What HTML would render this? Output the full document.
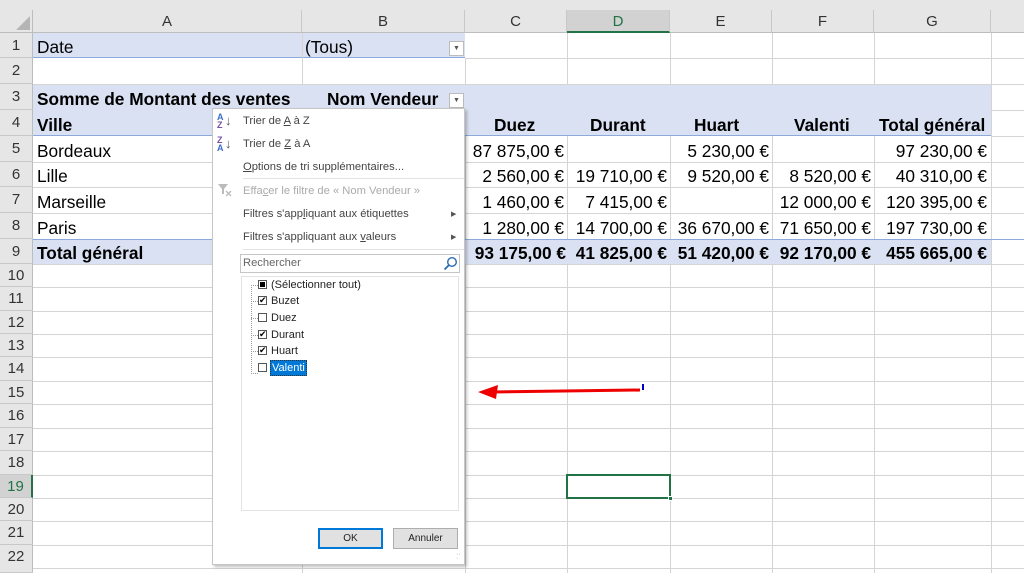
<!DOCTYPE html>
<html><head><meta charset="utf-8"><style>
*{margin:0;padding:0;box-sizing:border-box}
body{width:1024px;height:573px;overflow:hidden;background:#fff;position:relative;font-family:"Liberation Sans",sans-serif}
.a{position:absolute}
.vl{position:absolute;width:1px;background:#d4d4d4}
.hl{position:absolute;height:1px;background:#d4d4d4}
.ch{position:absolute;top:10px;height:23px;background:#e6e6e6;border-right:1px solid #c8c8c8;border-bottom:1px solid #bdbdbd;font-size:15px;color:#333;text-align:center;line-height:23px}
.rh{position:absolute;left:0;width:33px;background:#e6e6e6;border-bottom:1px solid #c8c8c8;border-right:1px solid #bdbdbd;font-size:15px;color:#333;text-align:center}
.c{position:absolute;font-size:17.3px;color:#000;white-space:nowrap;line-height:28px;height:26px}
.b{font-weight:bold}
.r{text-align:right}
.m{position:absolute;left:243px;font-size:11.2px;color:#444;white-space:nowrap}
.g{color:#aaa}
.it{position:absolute;left:271px;font-size:11px;color:#222;white-space:nowrap}
.cb{position:absolute;left:258px;width:9px;height:9px;border:1px solid #555;background:#fff;font-size:9px;line-height:7px;text-align:center;color:#000}
</style></head><body>
<div class="a" style="left:0;top:0;width:1024px;height:10px;background:#e6e6e6"></div>
<div class="a" style="left:0;top:10px;width:33px;height:23px;background:#e6e6e6;border-right:1px solid #bdbdbd;border-bottom:1px solid #bdbdbd"></div>
<svg class="a" style="left:16px;top:16px" width="14" height="14"><polygon points="14,0 14,14 0,14" fill="#b5b5b5"/></svg>
<div class="ch" style="left:33px;width:269px">A</div>
<div class="ch" style="left:302px;width:163px">B</div>
<div class="ch" style="left:465px;width:102px">C</div>
<div class="ch" style="left:567px;width:103px;background:#d2d2d2;color:#217346;border-bottom:2px solid #217346">D</div>
<div class="ch" style="left:670px;width:102px">E</div>
<div class="ch" style="left:772px;width:102px">F</div>
<div class="ch" style="left:874px;width:117px">G</div>
<div class="ch" style="left:991px;width:40px"></div>

<div class="rh" style="top:33px;height:25px;line-height:25px">1</div>
<div class="rh" style="top:58px;height:26px;line-height:26px">2</div>
<div class="rh" style="top:84px;height:26px;line-height:26px">3</div>
<div class="rh" style="top:110px;height:26px;line-height:26px">4</div>
<div class="rh" style="top:136px;height:26px;line-height:26px">5</div>
<div class="rh" style="top:162px;height:25px;line-height:25px">6</div>
<div class="rh" style="top:187px;height:26px;line-height:26px">7</div>
<div class="rh" style="top:213px;height:26px;line-height:26px">8</div>
<div class="rh" style="top:239px;height:25px;line-height:25px">9</div>
<div class="rh" style="top:264px;height:23px;line-height:23px">10</div>
<div class="rh" style="top:287px;height:24px;line-height:24px">11</div>
<div class="rh" style="top:311px;height:23px;line-height:23px">12</div>
<div class="rh" style="top:334px;height:23px;line-height:23px">13</div>
<div class="rh" style="top:357px;height:24px;line-height:24px">14</div>
<div class="rh" style="top:381px;height:23px;line-height:23px">15</div>
<div class="rh" style="top:404px;height:24px;line-height:24px">16</div>
<div class="rh" style="top:428px;height:23px;line-height:23px">17</div>
<div class="rh" style="top:451px;height:24px;line-height:24px">18</div>
<div class="rh" style="top:475px;height:23px;line-height:23px;background:#d2d2d2;color:#217346;border-right:2px solid #217346">19</div>
<div class="rh" style="top:498px;height:23px;line-height:23px">20</div>
<div class="rh" style="top:521px;height:24px;line-height:24px">21</div>
<div class="rh" style="top:545px;height:28px;line-height:23px">22</div>

<div class="a" style="left:33px;top:33px;width:432px;height:25px;background:#d9e1f2;border-bottom:1px solid #8ea9db"></div>
<div class="a" style="left:33px;top:84px;width:958px;height:52px;background:#d9e1f2;border-bottom:1px solid #8ea9db"></div>
<div class="a" style="left:33px;top:239px;width:958px;height:25px;background:#d9e1f2;border-top:1px solid #8ea9db"></div>

<div class="vl" style="left:302px;top:33px;height:51px"></div>
<div class="vl" style="left:302px;top:136px;height:103px"></div>
<div class="vl" style="left:302px;top:264px;height:309px"></div>
<div class="vl" style="left:465px;top:58px;height:26px"></div>
<div class="vl" style="left:465px;top:136px;height:103px"></div>
<div class="vl" style="left:465px;top:264px;height:309px"></div>
<div class="vl" style="left:567px;top:33px;height:51px"></div>
<div class="vl" style="left:567px;top:136px;height:103px"></div>
<div class="vl" style="left:567px;top:264px;height:309px"></div>
<div class="vl" style="left:670px;top:33px;height:51px"></div>
<div class="vl" style="left:670px;top:136px;height:103px"></div>
<div class="vl" style="left:670px;top:264px;height:309px"></div>
<div class="vl" style="left:772px;top:33px;height:51px"></div>
<div class="vl" style="left:772px;top:136px;height:103px"></div>
<div class="vl" style="left:772px;top:264px;height:309px"></div>
<div class="vl" style="left:874px;top:33px;height:51px"></div>
<div class="vl" style="left:874px;top:136px;height:103px"></div>
<div class="vl" style="left:874px;top:264px;height:309px"></div>
<div class="vl" style="left:991px;top:33px;height:540px"></div>
<div class="hl" style="left:465px;top:58px;width:559px"></div>
<div class="hl" style="left:33px;top:84px;width:991px"></div>
<div class="hl" style="left:991px;top:110px;width:33px"></div>
<div class="hl" style="left:991px;top:136px;width:33px"></div>
<div class="hl" style="left:33px;top:162px;width:991px"></div>
<div class="hl" style="left:33px;top:187px;width:991px"></div>
<div class="hl" style="left:33px;top:213px;width:991px"></div>
<div class="hl" style="left:33px;top:239px;width:991px;background:#8ea9db"></div>
<div class="hl" style="left:33px;top:264px;width:991px"></div>
<div class="hl" style="left:33px;top:287px;width:991px"></div>
<div class="hl" style="left:33px;top:311px;width:991px"></div>
<div class="hl" style="left:33px;top:334px;width:991px"></div>
<div class="hl" style="left:33px;top:357px;width:991px"></div>
<div class="hl" style="left:33px;top:381px;width:991px"></div>
<div class="hl" style="left:33px;top:404px;width:991px"></div>
<div class="hl" style="left:33px;top:428px;width:991px"></div>
<div class="hl" style="left:33px;top:451px;width:991px"></div>
<div class="hl" style="left:33px;top:475px;width:991px"></div>
<div class="hl" style="left:33px;top:498px;width:991px"></div>
<div class="hl" style="left:33px;top:521px;width:991px"></div>
<div class="hl" style="left:33px;top:545px;width:991px"></div>
<div class="hl" style="left:33px;top:568px;width:991px"></div>

<div class="c" style="left:37px;top:33px">Date</div>
<div class="c" style="left:305px;top:33px">(Tous)</div>
<div class="a" style="left:449px;top:41px;width:15px;height:15px;border:1px solid #bbb;background:#fff;font-size:7px;color:#555;text-align:center;line-height:13px">▼</div>
<div class="c b" style="left:37px;top:85px">Somme de Montant des ventes</div>
<div class="c b" style="left:327px;top:85px">Nom Vendeur</div>
<div class="a" style="left:449px;top:93px;width:15px;height:15px;border:1px solid #bbb;background:#fff;font-size:7px;color:#555;text-align:center;line-height:13px">▼</div>
<div class="c b" style="left:37px;top:111px">Ville</div>
<div class="c b" style="left:494px;top:111px">Duez</div>
<div class="c b" style="left:590px;top:111px">Durant</div>
<div class="c b" style="left:694px;top:111px">Huart</div>
<div class="c b" style="left:794px;top:111px">Valenti</div>
<div class="c b" style="left:879px;top:111px">Total général</div>

<div class="c" style="left:37px;top:137px">Bordeaux</div>
<div class="c" style="left:37px;top:162px">Lille</div>
<div class="c" style="left:37px;top:188px">Marseille</div>
<div class="c" style="left:37px;top:214px">Paris</div>
<div class="c b" style="left:37px;top:239px">Total général</div>

<div class="c r" style="right:460px;top:137px">87 875,00 €</div>
<div class="c r" style="right:460px;top:162px">2 560,00 €</div>
<div class="c r" style="right:460px;top:188px">1 460,00 €</div>
<div class="c r" style="right:460px;top:214px">1 280,00 €</div>
<div class="c r b" style="right:458px;top:239px">93 175,00 €</div>

<div class="c r" style="right:357px;top:162px">19 710,00 €</div>
<div class="c r" style="right:357px;top:188px">7 415,00 €</div>
<div class="c r" style="right:357px;top:214px">14 700,00 €</div>
<div class="c r b" style="right:357px;top:239px">41 825,00 €</div>

<div class="c r" style="right:255px;top:137px">5 230,00 €</div>
<div class="c r" style="right:255px;top:162px">9 520,00 €</div>
<div class="c r" style="right:255px;top:214px">36 670,00 €</div>
<div class="c r b" style="right:255px;top:239px">51 420,00 €</div>

<div class="c r" style="right:153px;top:162px">8 520,00 €</div>
<div class="c r" style="right:153px;top:188px">12 000,00 €</div>
<div class="c r" style="right:153px;top:214px">71 650,00 €</div>
<div class="c r b" style="right:153px;top:239px">92 170,00 €</div>

<div class="c r" style="right:37px;top:137px">97 230,00 €</div>
<div class="c r" style="right:37px;top:162px">40 310,00 €</div>
<div class="c r" style="right:37px;top:188px">120 395,00 €</div>
<div class="c r" style="right:37px;top:214px">197 730,00 €</div>
<div class="c r b" style="right:37px;top:239px">455 665,00 €</div>

<div class="a" style="left:566px;top:474px;width:105px;height:25px;border:2px solid #217346"></div>
<div class="a" style="left:668px;top:496px;width:5px;height:5px;background:#217346;border:1px solid #fff"></div>

<svg class="a" style="left:470px;top:380px" width="185" height="22">
<line x1="170" y1="10" x2="22" y2="12" stroke="#e00" stroke-width="3"/>
<polygon points="8,12 28,5 26,19" fill="#e00"/>
<line x1="173" y1="4" x2="173" y2="10" stroke="#00c" stroke-width="2"/>
</svg>

<div class="a" style="left:212px;top:108px;width:253px;height:457px;background:#fff;border:1px solid #c6c6c6;box-shadow:2px 2px 3px rgba(0,0,0,.25)"></div>
<div class="a" style="left:217px;top:113px;font-size:9px;line-height:8px;color:#3a6cc8;font-weight:bold">A<br><span style="color:#7b4fa8">Z</span></div>
<div class="a" style="left:225px;top:113px;font-size:13px;color:#555">↓</div>
<div class="a" style="left:217px;top:136px;font-size:9px;line-height:8px;color:#7b4fa8;font-weight:bold">Z<br><span style="color:#3a6cc8">A</span></div>
<div class="a" style="left:225px;top:136px;font-size:13px;color:#555">↓</div>
<div class="m" style="top:115px">Trier de <u>A</u> à Z</div>
<div class="m" style="top:138px">Trier de <u>Z</u> à A</div>
<div class="m" style="top:161px"><u>O</u>ptions de tri supplémentaires...</div>
<div class="a" style="left:243px;top:178px;width:221px;height:1px;background:#e3e3e3"></div>
<svg class="a" style="left:217px;top:183px" width="16" height="14"><polygon points="1,1 11,1 7,6 7,11 5,11 5,6" fill="#bbb"/><path d="M9 8 L14 13 M14 8 L9 13" stroke="#bbb" stroke-width="1.3"/></svg>
<div class="m g" style="top:185px">Effa<u>c</u>er le filtre de « Nom Vendeur »</div>
<div class="m" style="top:208px">Filtres s'app<u>l</u>iquant aux étiquettes</div>
<div class="m" style="top:231px">Filtres s'appliquant aux <u>v</u>aleurs</div>
<div class="a" style="left:451px;top:210px;font-size:7px;color:#555">▶</div>
<div class="a" style="left:451px;top:233px;font-size:7px;color:#555">▶</div>
<div class="a" style="left:243px;top:249px;width:221px;height:1px;background:#e3e3e3"></div>
<div class="a" style="left:240px;top:254px;width:220px;height:19px;border:1px solid #c6c6c6"></div>
<div class="m" style="left:243px;top:257px;color:#666">Rechercher</div>
<svg class="a" style="left:443px;top:256px" width="15" height="15"><circle cx="9" cy="6" r="4.3" fill="none" stroke="#2a6ab0" stroke-width="1.4"/><line x1="6" y1="9" x2="1.5" y2="13.5" stroke="#2a6ab0" stroke-width="1.8"/></svg>
<div class="a" style="left:241px;top:276px;width:218px;height:235px;border:1px solid #e3e3e3"></div>
<div class="a" style="left:251px;top:285px;height:89px;border-left:1px dotted #999"></div>
<div class="a" style="left:251px;top:285px;width:7px;border-top:1px dotted #999"></div>
<div class="a" style="left:251px;top:301px;width:7px;border-top:1px dotted #999"></div>
<div class="a" style="left:251px;top:318px;width:7px;border-top:1px dotted #999"></div>
<div class="a" style="left:251px;top:335px;width:7px;border-top:1px dotted #999"></div>
<div class="a" style="left:251px;top:351px;width:7px;border-top:1px dotted #999"></div>
<div class="a" style="left:251px;top:373px;width:7px;border-top:1px dotted #999"></div>
<div class="cb" style="top:280px"><div style="width:5px;height:5px;background:#000;margin:1px"></div></div>
<div class="cb" style="top:296px">✔</div>
<div class="cb" style="top:313px"></div>
<div class="cb" style="top:330px">✔</div>
<div class="cb" style="top:346px">✔</div>
<div class="cb" style="top:363px"></div>
<div class="it" style="top:279px">(Sélectionner tout)</div>
<div class="it" style="top:295px">Buzet</div>
<div class="it" style="top:312px">Duez</div>
<div class="it" style="top:329px">Durant</div>
<div class="it" style="top:345px">Huart</div>
<div class="it" style="left:270px;top:360px;background:#0078d7;color:#fff;padding:1px 1px;border:1px dotted #333">Valenti</div>
<div class="a" style="left:318px;top:528px;width:65px;height:21px;border:1px solid #0078d7;background:#e1e1e1;box-shadow:inset 0 0 0 1px #0078d7;font-size:10px;text-align:center;line-height:19px;color:#222">OK</div>
<div class="a" style="left:393px;top:528px;width:65px;height:21px;border:1px solid #adadad;background:#e1e1e1;font-size:10px;text-align:center;line-height:19px;color:#222">Annuler</div>
<div class="a" style="left:456px;top:553px;font-size:7px;color:#999;line-height:4px">··<br>·</div>
</body></html>
